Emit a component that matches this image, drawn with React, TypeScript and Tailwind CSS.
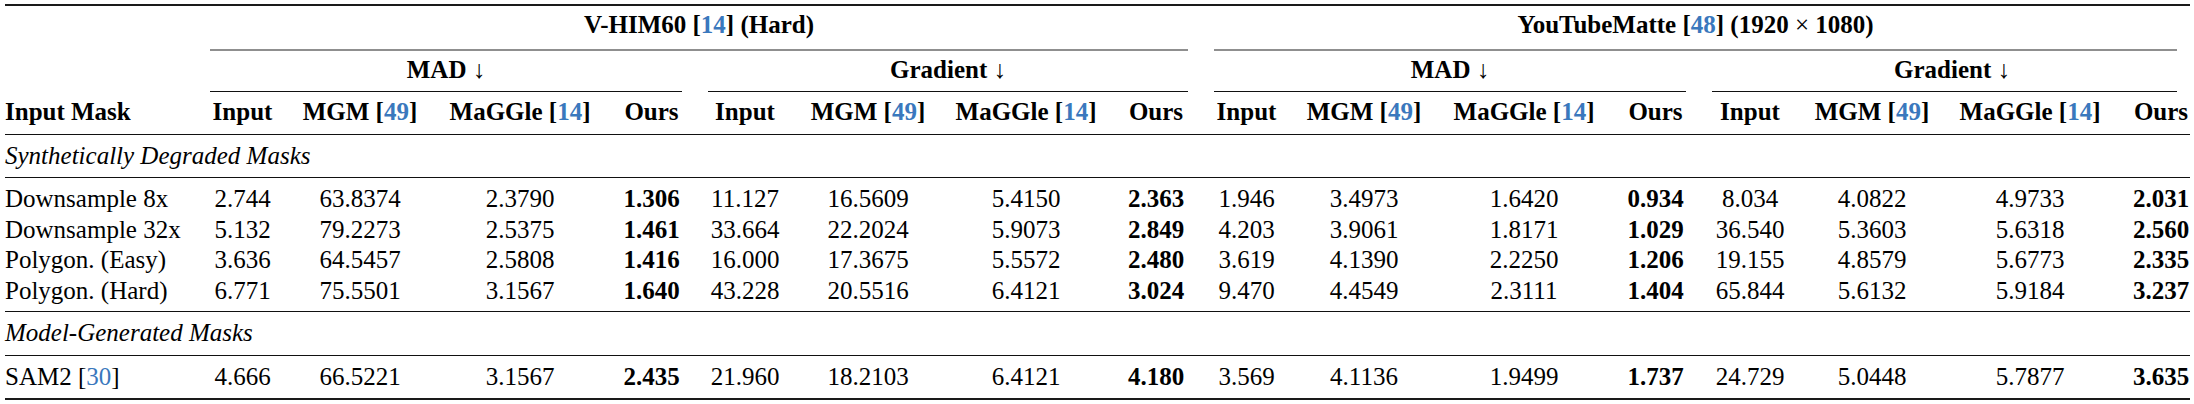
import React from "react";

const cols =
  "grid grid-cols-[192px_91px_144px_176px_87px_100px_146px_170px_90px_91px_144px_176px_87px_102px_142px_174px_73px]";

const Cite = ({ n }: { n: string }) => (
  <>
    [<span className="text-[#3a78bd]">{n}</span>]
  </>
);

type Row = { name: React.ReactNode; vals: string[] };

const rowsA: Row[] = [
  {
    name: "Downsample 8x",
    vals: ["2.744", "63.8374", "2.3790", "1.306", "11.127", "16.5609", "5.4150", "2.363", "1.946", "3.4973", "1.6420", "0.934", "8.034", "4.0822", "4.9733", "2.031"],
  },
  {
    name: "Downsample 32x",
    vals: ["5.132", "79.2273", "2.5375", "1.461", "33.664", "22.2024", "5.9073", "2.849", "4.203", "3.9061", "1.8171", "1.029", "36.540", "5.3603", "5.6318", "2.560"],
  },
  {
    name: "Polygon. (Easy)",
    vals: ["3.636", "64.5457", "2.5808", "1.416", "16.000", "17.3675", "5.5572", "2.480", "3.619", "4.1390", "2.2250", "1.206", "19.155", "4.8579", "5.6773", "2.335"],
  },
  {
    name: "Polygon. (Hard)",
    vals: ["6.771", "75.5501", "3.1567", "1.640", "43.228", "20.5516", "6.4121", "3.024", "9.470", "4.4549", "2.3111", "1.404", "65.844", "5.6132", "5.9184", "3.237"],
  },
];

const rowsB: Row[] = [
  {
    name: (
      <>
        SAM2 <Cite n="30" />
      </>
    ),
    vals: ["4.666", "66.5221", "3.1567", "2.435", "21.960", "18.2103", "6.4121", "4.180", "3.569", "4.1136", "1.9499", "1.737", "24.729", "5.0448", "5.7877", "3.635"],
  },
];

const subHeads = (
  <>
    <div className="text-center">Input</div>
    <div className="text-center">
      MGM <Cite n="49" />
    </div>
    <div className="text-center">
      MaGGle <Cite n="14" />
    </div>
    <div className="text-center">Ours</div>
  </>
);

function DataRow({ r }: { r: Row }) {
  return (
    <div className={cols + " leading-[30.5px]"}>
      <div className="whitespace-nowrap">{r.name}</div>
      {r.vals.map((v, i) => {
        const bold = i % 4 === 3;
        const last = i === 15;
        return (
          <div
            key={i}
            className={
              "text-center " + (bold ? "font-bold " : "") + (last ? "pl-[15px]" : "")
            }
          >
            {v}
          </div>
        );
      })}
    </div>
  );
}

export default function App() {
  return (
    <div className="w-[2194px] h-[404px] bg-white text-black font-['Liberation_Serif',serif] text-[25px] overflow-hidden">
      <div className="ml-[5px] w-[2185px]">
        {/* top rule */}
        <div className="mt-[4px] h-[2px] bg-[#1a1a1a]" />

        {/* header row 1 */}
        <div className={cols + " pt-[4px] leading-[30px] font-bold"}>
          <div className="col-start-2 col-end-10 text-center whitespace-nowrap">
            V-HIM60 <Cite n="14" /> (Hard)
          </div>
          <div className="col-start-10 col-end-18 text-center whitespace-nowrap">
            YouTubeMatte <Cite n="48" /> (1920 <span className="font-normal">×</span> 1080)
          </div>
        </div>
        <div className={cols + " mt-[9px]"}>
          <div className="col-start-2 col-end-10 mx-[13px] h-[2px] bg-[#8f8f8f]" />
          <div className="col-start-10 col-end-18 mx-[13px] h-[2px] bg-[#8f8f8f]" />
        </div>

        {/* header row 2 */}
        <div className={cols + " mt-[4px] leading-[30px] font-bold"}>
          <div className="col-start-2 col-end-6 text-center">
            MAD <span className="font-normal">↓</span>
          </div>
          <div className="col-start-6 col-end-10 text-center">
            Gradient <span className="font-normal">↓</span>
          </div>
          <div className="col-start-10 col-end-14 text-center">
            MAD <span className="font-normal">↓</span>
          </div>
          <div className="col-start-14 col-end-18 text-center pl-[15px]">
            Gradient <span className="font-normal">↓</span>
          </div>
        </div>
        <div className={cols + " mt-[6px]"}>
          <div className="col-start-2 col-end-6 mx-[13px] h-[1px] bg-[#111]" />
          <div className="col-start-6 col-end-10 mx-[13px] h-[1px] bg-[#111]" />
          <div className="col-start-10 col-end-14 mx-[13px] h-[1px] bg-[#111]" />
          <div className="col-start-14 col-end-18 mx-[13px] h-[1px] bg-[#111]" />
        </div>

        {/* header row 3 */}
        <div className={cols + " mt-[5px] leading-[30px] font-bold whitespace-nowrap"}>
          <div>Input Mask</div>
          {subHeads}
          {subHeads}
          {subHeads}
          <div className="text-center">Input</div>
          <div className="text-center">
            MGM <Cite n="49" />
          </div>
          <div className="text-center">
            MaGGle <Cite n="14" />
          </div>
          <div className="text-center pl-[15px]">Ours</div>
        </div>
        <div className="mt-[7px] h-[1px] bg-[#111]" />

        <div className="mt-[6px] leading-[30px] italic">Synthetically Degraded Masks</div>
        <div className="mt-[6px] h-[1px] bg-[#111]" />

        <div className="mt-[6px]">
          {rowsA.map((r, i) => (
            <DataRow key={i} r={r} />
          ))}
        </div>
        <div className="mt-[5px] h-[1px] bg-[#111]" />

        <div className="mt-[6px] leading-[30px] italic">Model-Generated Masks</div>
        <div className="mt-[7px] h-[1px] bg-[#111]" />

        <div className="mt-[6px]">
          {rowsB.map((r, i) => (
            <DataRow key={i} r={r} />
          ))}
        </div>
        <div className="mt-[5px] h-[2px] bg-[#1a1a1a]" />
      </div>
    </div>
  );
}
